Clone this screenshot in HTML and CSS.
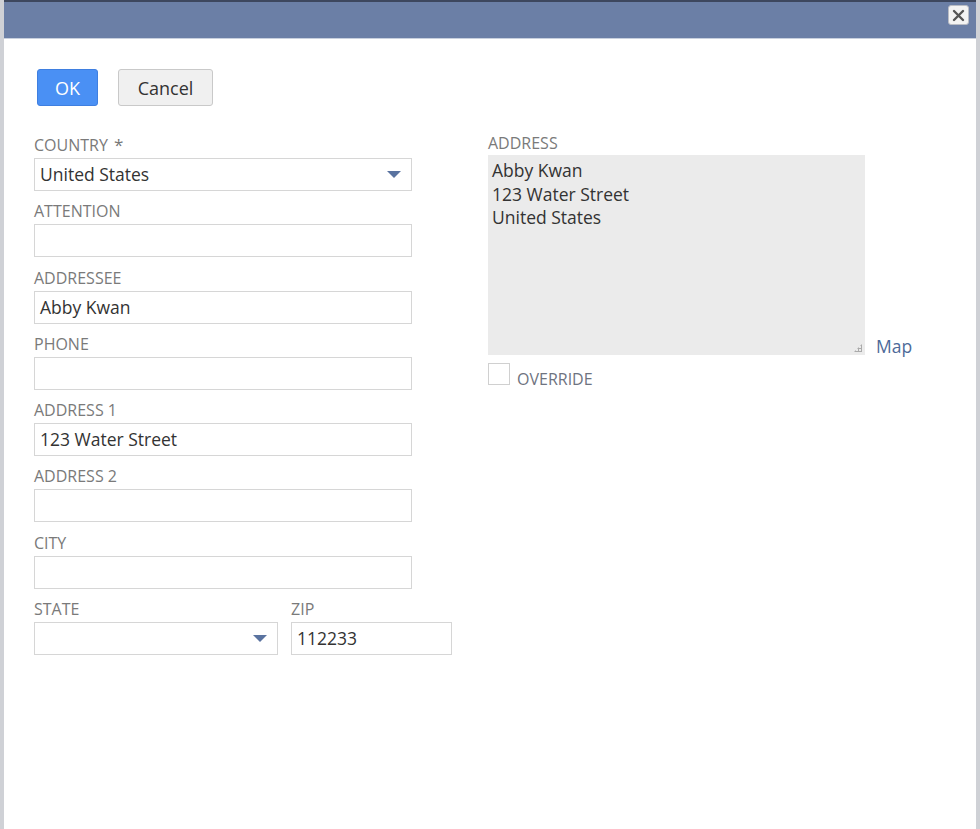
FILE: index.html
```html
<!DOCTYPE html>
<html lang="en">
<head>
    <meta charset="UTF-8">
    <meta name="viewport" content="width=device-width, initial-scale=1.0">
    <title>Address</title>
    <link rel="stylesheet" href="styles.css">
</head>
<body>
    <div class="dialog">
        <div class="titlebar">
            <button class="btn-close" type="button">
                <svg width="13" height="13" viewBox="0 0 13 13">
                    <path d="M2 2 L11 11 M11 2 L2 11" stroke="#555" stroke-width="2.4" stroke-linecap="round"/>
                </svg>
            </button>
        </div>

        <div class="content">
            <div class="actions">
                <button class="btn btn-ok" type="button">OK</button>
                <button class="btn btn-cancel" type="button">Cancel</button>
            </div>

            <div class="columns">
                <div class="col-left">
                    <div class="field">
                        <label>COUNTRY <span class="req">*</span></label>
                        <div class="input select">United States<span class="arrow"></span></div>
                    </div>
                    <div class="field">
                        <label>ATTENTION</label>
                        <div class="input"></div>
                    </div>
                    <div class="field">
                        <label>ADDRESSEE</label>
                        <div class="input">Abby Kwan</div>
                    </div>
                    <div class="field">
                        <label>PHONE</label>
                        <div class="input"></div>
                    </div>
                    <div class="field">
                        <label>ADDRESS 1</label>
                        <div class="input">123 Water Street</div>
                    </div>
                    <div class="field">
                        <label>ADDRESS 2</label>
                        <div class="input"></div>
                    </div>
                    <div class="field">
                        <label>CITY</label>
                        <div class="input"></div>
                    </div>
                    <div class="field-row">
                        <div class="field state">
                            <label>STATE</label>
                            <div class="input select"><span class="arrow"></span></div>
                        </div>
                        <div class="field zip">
                            <label>ZIP</label>
                            <div class="input">112233</div>
                        </div>
                    </div>
                </div>

                <div class="col-right">
                    <label>ADDRESS</label>
                    <div class="address-row">
                        <div class="address-box">
                            Abby Kwan<br>
                            123 Water Street<br>
                            United States
                            <span class="grip"></span>
                        </div>
                        <a href="#" class="map-link">Map</a>
                    </div>
                    <div class="override">
                        <span class="checkbox"></span>
                        <span>OVERRIDE</span>
                    </div>
                </div>
            </div>
        </div>
    </div>
</body>
</html>
```

FILE: styles.css
```css
*{
    padding: 0;
    margin: 0;
    box-sizing: border-box;
}

body{
    height: 829px;
    overflow: hidden;
    background: #cfd1d6;
    font-family: "Open Sans", "Noto Sans", sans-serif;
}

.dialog {
    margin: 0 4px;
    height: 100%;
    background: #fff;
}

.titlebar {
    height: 39px;
    background: #6b7fa6;
    border-top: 2px solid #3d475e;
    border-bottom: 1px solid #c8d0de;
    display: flex;
    justify-content: flex-end;
    align-items: flex-start;
    padding: 3px 7px 0 0;
}

.btn-close {
    width: 21px;
    height: 20px;
    background: #f3f3f3;
    border: 1px solid #b9bcc4;
    border-radius: 3px;
    display: flex;
    align-items: center;
    justify-content: center;
}

.content {
    padding: 30px 30px;
}

.actions {
    display: flex;
    gap: 20px;
    margin-left: 3px;
}

.btn {
    height: 37px;
    font-family: inherit;
    font-size: 18px;
    border-radius: 3px;
}

.btn-ok {
    width: 61px;
    background: #4a90f4;
    border: 1px solid #3f7fe0;
    color: #fff;
}

.btn-cancel {
    width: 95px;
    background: #f0f0f0;
    border: 1px solid #c9c9c9;
    color: #333;
}

.columns {
    display: flex;
    gap: 36px;
    margin-top: 29px;
}

.col-left {
    width: 418px;
}

label {
    display: block;
    height: 20px;
    line-height: 20px;
    font-size: 16px;
    color: #7a7a7a;
    margin-bottom: 3px;
}

.req {
    color: #777;
    font-size: 17px;
    margin-left: 2px;
}

.field {
    margin-bottom: 10.3px;
    width: 378px;
}

.input {
    height: 33px;
    border: 1px solid #d6d6d6;
    font-size: 17.5px;
    color: #333;
    line-height: 31px;
    padding: 0 5px;
    position: relative;
}

.arrow {
    position: absolute;
    right: 10px;
    top: 12px;
    width: 0;
    height: 0;
    border-left: 7px solid transparent;
    border-right: 7px solid transparent;
    border-top: 7px solid #5a73a0;
}

.field-row {
    display: flex;
    gap: 13px;
}

.field.state {
    width: 244px;
}

.field.zip {
    width: 161px;
}

.col-right {
    margin-top: -2px;
}

.col-right label {
    margin-bottom: 2px;
}

.address-row {
    display: flex;
    align-items: flex-end;
    gap: 11px;
}

.address-box {
    width: 377px;
    height: 200px;
    background: #ebebeb;
    font-size: 17.5px;
    line-height: 23.5px;
    color: #333;
    padding: 4px 4px;
    position: relative;
}

.grip {
    position: absolute;
    right: 3px;
    bottom: 3px;
    width: 8px;
    height: 8px;
    background:
        radial-gradient(circle, #aaa 1px, transparent 1.2px) 0 0 / 3px 3px;
    clip-path: polygon(100% 0, 100% 100%, 0 100%);
}

.map-link {
    color: #4d6a99;
    font-size: 17.5px;
    text-decoration: none;
    line-height: 22px;
    margin-bottom: -2px;
}

.override {
    display: flex;
    align-items: center;
    gap: 7px;
    margin-top: 3px;
    font-size: 16px;
    color: #6e7380;
}

.checkbox {
    width: 22px;
    height: 22px;
    border: 1px solid #d0d0d0;
    background: #fff;
}

.override span:last-child {
    margin-top: 10px;
}
```
